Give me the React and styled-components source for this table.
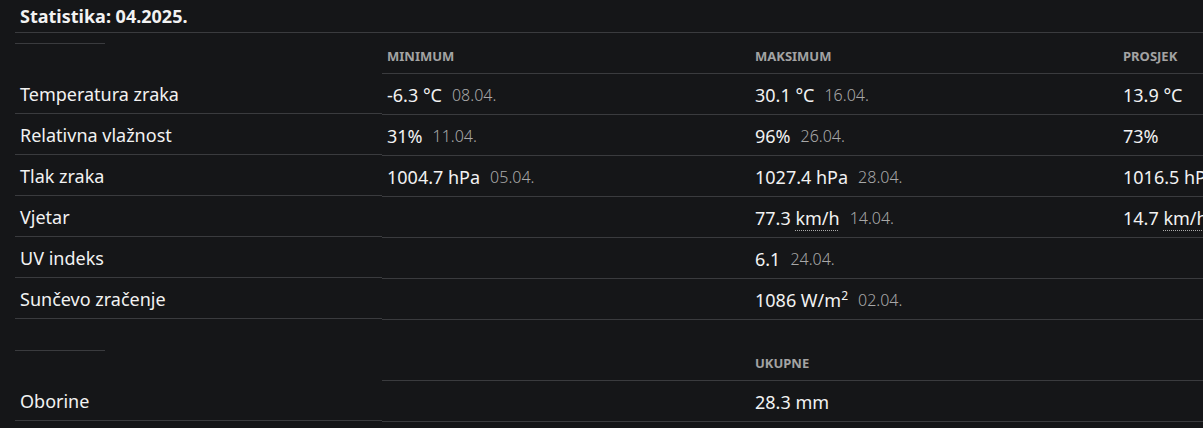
import React from "react";
import styled, { createGlobalStyle } from "styled-components";

const Global = createGlobalStyle`
  html, body { margin: 0; padding: 0; background: #151618; overflow: hidden; }
  body { font-family: "Noto Sans", "Open Sans", sans-serif; color: #f2f2f2; }
`;

const Page = styled.div`
  padding-left: 15px;
  width: 1600px;
`;

const TitleBar = styled.div`
  height: 32px;
  border-bottom: 1px solid #3a3b3e;
  display: flex;
  align-items: center;
  padding-left: 5px;
  font-size: 18px;
  font-weight: 700;
`;

const Section = styled.div`
  display: flex;
  margin-top: ${(p) => (p.$first ? "0" : "20px")};
`;

const LabelCol = styled.div`
  width: 367px;
  flex: none;
`;

const Stub = styled.div`
  width: 90px;
  height: 10px;
  border-bottom: 1px solid #3a3b3e;
  margin-bottom: 29px;
`;

const LabelCell = styled.div`
  height: 40px;
  border-bottom: 1px solid #3a3b3e;
  display: flex;
  align-items: center;
  padding: 1px 0 0 5px;
  box-sizing: content-box;
  height: 39px;
  font-size: 18px;
`;

const DataTable = styled.div`
  display: grid;
  grid-template-columns: repeat(${(p) => p.$cols}, 368px);
  width: 1104px;
  flex: none;
`;

const HeadCell = styled.div`
  border-bottom: 1px solid #3a3b3e;
  display: flex;
  align-items: flex-end;
  padding: 0 5px 8px;
  box-sizing: border-box;
  height: 41px;
  font-size: 13px;
  font-weight: 700;
  color: #a3a3a3;
`;

const Cell = styled.div`
  height: 41px;
  box-sizing: border-box;
  border-bottom: 1px solid #3a3b3e;
  display: flex;
  align-items: center;
  padding: 1px 0 0 5px;
  font-size: 18px;
  white-space: nowrap;
`;

const DateText = styled.span`
  margin-left: 10px;
  font-size: 16px;
  font-weight: 300;
  color: #a8a8a8;
`;

const Unit = styled.abbr`
  text-decoration: underline dotted #aaa;
  text-decoration-thickness: 1px;
  text-underline-offset: 5px;
`;

const Sup = styled.sup`
  font-size: 12px;
  line-height: 0;
`;

const rows = [
  { label: "Temperatura zraka", min: ["-6.3 °C", "08.04."], max: ["30.1 °C", "16.04."], avg: "13.9 °C" },
  { label: "Relativna vlažnost", min: ["31%", "11.04."], max: ["96%", "26.04."], avg: "73%" },
  { label: "Tlak zraka", min: ["1004.7 hPa", "05.04."], max: ["1027.4 hPa", "28.04."], avg: "1016.5 hPa" },
  {
    label: "Vjetar",
    min: null,
    max: [<>77.3 <Unit title="kilometara na sat">km/h</Unit></>, "14.04."],
    avg: <>14.7 <Unit title="kilometara na sat">km/h</Unit></>,
  },
  { label: "UV indeks", min: null, max: ["6.1", "24.04."], avg: null },
  {
    label: "Sunčevo zračenje",
    min: null,
    max: [<>1086 W/m<Sup>2</Sup></>, "02.04."],
    avg: null,
  },
];

function Value({ v }) {
  if (!v) return <Cell />;
  return (
    <Cell>
      <span>{v[0]}</span>
      <DateText>{v[1]}</DateText>
    </Cell>
  );
}

export default function App() {
  return (
    <>
      <Global />
      <Page>
        <TitleBar>Statistika: 04.2025.</TitleBar>
        <Section $first>
          <LabelCol>
            <Stub />
            {rows.map((r) => (
              <LabelCell key={r.label}>{r.label}</LabelCell>
            ))}
          </LabelCol>
          <DataTable $cols={3}>
            <HeadCell>MINIMUM</HeadCell>
            <HeadCell>MAKSIMUM</HeadCell>
            <HeadCell>PROSJEK</HeadCell>
            {rows.map((r) => (
              <React.Fragment key={r.label}>
                <Value v={r.min} />
                <Value v={r.max} />
                <Cell>{r.avg ? <span>{r.avg}</span> : null}</Cell>
              </React.Fragment>
            ))}
          </DataTable>
        </Section>
        <Section>
          <LabelCol>
            <Stub />
            <LabelCell>Oborine</LabelCell>
          </LabelCol>
          <DataTable $cols={3}>
            <HeadCell />
            <HeadCell>UKUPNE</HeadCell>
            <HeadCell />
            <Cell />
            <Cell>28.3 mm</Cell>
            <Cell />
          </DataTable>
        </Section>
      </Page>
    </>
  );
}
